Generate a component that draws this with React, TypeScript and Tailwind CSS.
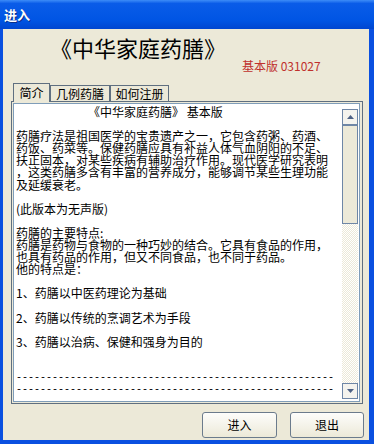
import React from "react";

type Line = { text: string; mono?: boolean; indent?: boolean };

const LINES: Line[] = [
  { text: "《中华家庭药膳》 基本版", indent: true },
  { text: "" },
  { text: "药膳疗法是祖国医学的宝贵遗产之一，它包含药粥、药酒、" },
  { text: "药饭、药菜等。保健药膳应具有补益人体气血阴阳的不足、" },
  { text: "扶正固本，对某些疾病有辅助治疗作用。现代医学研究表明" },
  { text: "，这类药膳多含有丰富的营养成分，能够调节某些生理功能" },
  { text: "及延缓衰老。" },
  { text: "" },
  { text: "(此版本为无声版)" },
  { text: "" },
  { text: "药膳的主要特点:" },
  { text: "药膳是药物与食物的一种巧妙的结合。它具有食品的作用，" },
  { text: "也具有药品的作用，但又不同食品，也不同于药品。" },
  { text: "他的特点是：" },
  { text: "" },
  { text: "1、药膳以中医药理论为基础" },
  { text: "" },
  { text: "2、药膳以传统的烹调艺术为手段" },
  { text: "" },
  { text: "3、药膳以治病、保健和强身为目的" },
  { text: "" },
  { text: "" },
  { text: "-".repeat(53), mono: true },
  { text: "-".repeat(53), mono: true },
];

function Arrow({ up }: { up?: boolean }) {
  return (
    <svg width="7" height="4" viewBox="0 0 7 4">
      <path d={up ? "M0 4 L3.5 0 L7 4 Z" : "M0 0 L3.5 4 L7 0 Z"} fill="#4d6185" />
    </svg>
  );
}

function Scrollbar() {
  return (
    <div className="flex flex-col w-[16px] mt-[5px] mb-[2px] mr-[1px]">
      <div className="h-[16px] border border-[#6e86a6] bg-[#f4f3ee] flex items-center justify-center">
        <Arrow up />
      </div>
      <div className="h-[99px] border border-[#6e86a6] bg-[#ece9d8]" />
      <div className="flex-1 bg-[repeating-conic-gradient(#ece9d8_0_25%,#ffffff_0_50%)] bg-[length:2px_2px]" />
      <div className="h-[16px] border border-[#6e86a6] bg-[#f4f3ee] flex items-center justify-center">
        <Arrow />
      </div>
    </div>
  );
}

function Tab({ label, active, width }: { label: string; active?: boolean; width: string }) {
  return (
    <div
      className={
        active
          ? `${width} h-[19px] -mb-[1px] relative z-10 bg-[#ece9d8] border-x border-t border-[#5f6f80] flex justify-center pt-[3px] leading-[12px]`
          : `${width} h-[16px] bg-[#ece9d8] border-x border-t border-[#5f6f80] flex justify-center pt-[2px] leading-[12px]`
      }
    >
      {label}
    </div>
  );
}

export default function App() {
  return (
    <div className="w-[374px] h-[444px] flex flex-col bg-[#0a50e0] font-['Noto_Sans_CJK_SC',sans-serif] text-[12px] text-black overflow-hidden">
      <div className="h-[29px] shrink-0 bg-[linear-gradient(to_bottom,#3d8cf8_0%,#0a5ce8_12%,#0055e4_70%,#0046d0_100%)] flex items-center pl-[4px]">
        <span className="text-white text-[13px] font-bold leading-none [text-shadow:1px_1px_0_#0a2f8a]">进入</span>
      </div>
      <div className="flex-1 ml-[3px] mr-[5px] mb-[4px] bg-[#ece9d8] flex flex-col">
        <div className="mt-[7px] pl-[47px] text-[22px] leading-[23px]">《中华家庭药膳》</div>
        <div className="mt-[1px] pl-[239px] leading-[12px] text-[#c0302c]">基本版 031027</div>
        <div className="mt-[11px] ml-[10px] h-[18px] flex items-end">
          <Tab label="简介" active width="w-[37px]" />
          <Tab label="几例药膳" width="w-[60px]" />
          <Tab label="如何注册" width="w-[59px]" />
        </div>
        <div className="ml-[8px] w-[352px] h-[303px] border border-[#5f6f80] pt-[1px] pl-[1px] pr-[2px] pb-[1px]">
          <div className="h-full border border-[#7f9db9] bg-white flex">
            <div className="flex-1 pl-[2px] pt-[2px] leading-[12.1px] whitespace-pre overflow-hidden">
              {LINES.map((l, i) =>
                l.text === "" ? (
                  <div key={i} className="h-[12.1px]" />
                ) : l.mono ? (
                  <div key={i} className="h-[12.1px] font-['Liberation_Mono',monospace] text-[10px]">
                    {l.text}
                  </div>
                ) : (
                  <div key={i} className={l.indent ? "h-[12.1px] pl-[72px]" : "h-[12.1px]"}>
                    {l.text}
                  </div>
                )
              )}
            </div>
            <Scrollbar />
          </div>
        </div>
        <div className="mt-[8px] flex justify-end gap-[13px] pr-[5px]">
          <button className="w-[75px] h-[26px] rounded-[3px] border border-[#6b7b8c] bg-[linear-gradient(to_bottom,#fdfdfb,#ece9d8)] flex items-center justify-center leading-none">
            进入
          </button>
          <button className="w-[74px] h-[26px] rounded-[3px] border border-[#6b7b8c] bg-[linear-gradient(to_bottom,#fdfdfb,#ece9d8)] flex items-center justify-center leading-none">
            退出
          </button>
        </div>
      </div>
    </div>
  );
}
